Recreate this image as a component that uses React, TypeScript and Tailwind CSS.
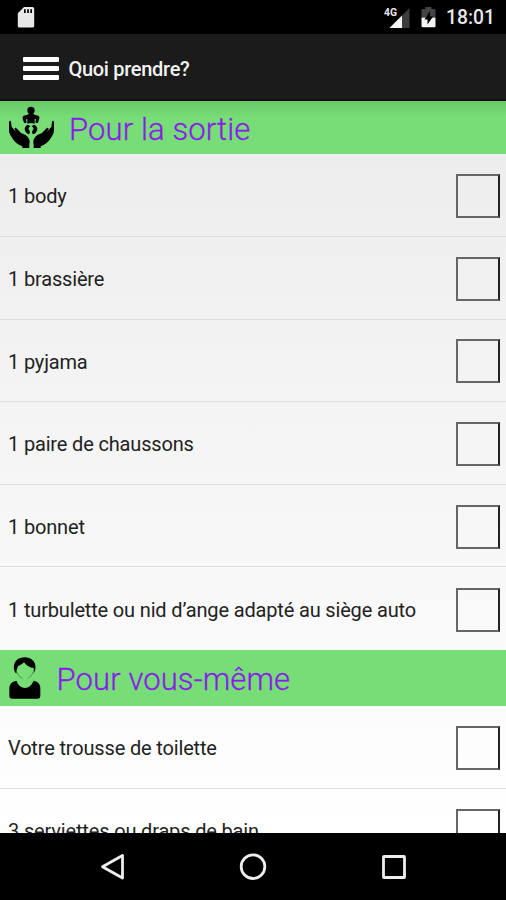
import { clsx } from 'clsx'
import type { ReactNode } from 'react'

const outingItems = [
  '1 body',
  '1 brassière',
  '1 pyjama',
  '1 paire de chaussons',
  '1 bonnet',
  '1 turbulette ou nid d’ange adapté au siège auto',
]

const personalItems = ['Votre trousse de toilette', '3 serviettes ou draps de bain']

function StatusBar() {
  return (
    <div className="flex h-[34px] shrink-0 items-center bg-black pl-[17px] pr-[11px] text-[#e8e8e8]">
      <svg className="mt-px h-[21px] w-[18px]" viewBox="0 0 18 21">
        <path
          fill="currentColor"
          fillRule="evenodd"
          d="M7 0H15.5Q17.2 0 17.2 1.7V19Q17.2 20.5 15.5 20.5H2.4Q.8 20.5 .8 19V6.3ZM7 2.2V6H8.7V2.2ZM10.2 2.2V6H11.9V2.2ZM13.3 2.2V6H15V2.2Z"
        />
      </svg>
      <div className="ml-auto flex items-center">
        <svg className="mr-[11px] mt-px h-[22px] w-[26px]" viewBox="0 0 26 22">
          <path fill="#3c3c3c" d="M25.500 1V21H5.500Z" />
          <path fill="#f4f4f4" d="M18 8.500V21H5.500Z" />
          <path fill="#000" d="M0 0H14V11H0Z" />
          <text
            x="0"
            y="9"
            fill="#e8e8e8"
            fontFamily="Roboto, sans-serif"
            fontSize="10.500"
            fontWeight="700"
            textLength="13"
            lengthAdjust="spacingAndGlyphs"
          >
            4G
          </text>
        </svg>
        <svg className="mr-[10px] h-[22px] w-[15px]" viewBox="0 0 15 22">
          <path
            fill="#444"
            d="M4.500 1H10.500V3H13.200Q14.500 3 14.500 4.300V11H.5V4.300Q.5 3 1.800 3H4.500Z"
          />
          <path fill="#f4f4f4" d="M.5 11.500H14.500V20Q14.500 21.300 13.200 21.300H1.800Q.5 21.300 .5 20Z" />
          <path fill="#000" d="M9 5 3.500 13.500H6.500V18.500L12 10.500H9Z" />
        </svg>
        <span className="mt-[2px] text-[19.300px] font-medium leading-none">18:01</span>
      </div>
    </div>
  )
}

function AppBar() {
  return (
    <header className="flex h-[67px] shrink-0 items-center border-b-2 border-[#101010] bg-[#1b1b1b] pl-[22.500px] text-[#f2f2f2]">
      <button className="mt-[3px] flex w-9 flex-col gap-[4px]" aria-label="Menu">
        <span className="h-[5px] rounded-[1px] bg-white" />
        <span className="h-[5px] rounded-[1px] bg-white" />
        <span className="h-[5px] rounded-[1px] bg-white" />
      </button>
      <h1 className="ml-[10px] mt-1 text-[20px] font-medium leading-none tracking-[-0.300px]">
        Quoi prendre?
      </h1>
    </header>
  )
}

function HandsIcon() {
  return (
    <svg className="h-[45px] w-[48px]" viewBox="24 27 144 135">
      {/* baby */}
      <circle cx="93" cy="43.500" r="11" />
      <path d="M71 59Q82 57 86 54H100Q104 57 115 59Q120 62 118 68L114 80Q109 83 106 79L108 70L104 69V83Q93 79 82 83V69L78 70L80 79Q77 83 72 80L68 68Q66 62 71 59Z" />
      <path d="M82 86L91 90L85 97L90 108L88 115L82 113Q70 102 76 92Z" />
      <path d="M104 86L95 90L101 97L96 108L98 115L104 113Q116 102 110 92Z" />
      {/* left and right hand */}
      <path d="M27 77Q30 71 33 77L35 93L48 107L43 98Q46 93 51 98L63 111L77 117Q90 128 89 138L88 147V156H67V151Q48 144 38 128Q27 114 27 103Z" />
      <path d="M162 77Q159 71 156 77L154 93L141 107L146 98Q143 93 138 98L126 111L112 117Q99 128 100 138L101 147V156H122V151Q141 144 151 128Q162 114 162 103Z" />
    </svg>
  )
}

function PersonIcon() {
  return (
    <svg className="h-[42px] w-[32px]" viewBox="27 50 96 126">
      <path d="M49 100Q38 88 43 70Q51 51 74 51Q98 52 105 70Q110 87 100 99Q103 90 101 83Q84 82 72 66Q66 73 54 78Q49 88 49 100Z" />
      <path
        fill="none"
        stroke="#000"
        strokeOpacity="0.45"
        strokeWidth="2"
        d="M50 95Q56 112 68 114M100 95Q94 111 83 114"
      />
      <path d="M49 121Q57 142 75 143Q92 142 101 121Q121 124 121 145V168Q121 175 114 175H35Q28 175 28 168V145Q28 124 49 121Z" />
    </svg>
  )
}

function SectionHeader({
  icon,
  title,
  className,
}: {
  icon: ReactNode
  title: string
  className?: string
}) {
  return (
    <div className={clsx('flex shrink-0 items-center bg-[#77dd77] pl-2', className)}>
      {icon}
      <h2 className="mt-[3px] text-[31px] font-light leading-none tracking-[0.120px] text-[#8a1bea] [-webkit-text-stroke:0.3px_#8a1bea]">
        {title}
      </h2>
    </div>
  )
}

function Item({ label }: { label: string }) {
  return (
    <li className="flex h-[82.600px] shrink-0 items-center justify-between border-b border-[#dedede] pl-2 pr-[6px] last:border-b-0">
      <span className="mt-[2.500px] text-[20px] leading-6 tracking-[-0.160px] text-[#222]">
        {label}
      </span>
      <span className="mt-[2px] size-11 border-2 border-[#666] border-r-[#222]" />
    </li>
  )
}

function NavigationBar() {
  return (
    <nav className="flex h-[67px] shrink-0 items-center justify-around bg-black pl-[43px] pr-[42px]">
      <svg className="size-[28px]" viewBox="0 0 28 28" fill="none" stroke="#eee" strokeWidth="2.800">
        <path strokeLinejoin="round" d="M23.500 2.500V25L3.500 13.700Z" />
      </svg>
      <svg className="size-[28px]" viewBox="0 0 28 28" fill="none" stroke="#eee" strokeWidth="2.800">
        <circle cx="14" cy="13.700" r="11.800" />
      </svg>
      <svg className="size-[28px]" viewBox="0 0 28 28" fill="none" stroke="#eee" strokeWidth="2.800">
        <rect x="3.500" y="3.500" width="21" height="21" rx="0.500" />
      </svg>
    </nav>
  )
}

export default function App() {
  return (
    <div className="flex h-[900px] w-[506px] flex-col overflow-hidden bg-black font-[Roboto,sans-serif]">
      <StatusBar />
      <AppBar />
      <main className="flex min-h-0 flex-1 flex-col overflow-hidden bg-linear-to-b from-[#ececec] to-white">
        <SectionHeader
          icon={<HandsIcon />}
          title="Pour la sortie"
          className="h-[53.400px] gap-[13px] bg-linear-to-b from-[#68c768] to-[#77dd77] to-30%"
        />
        <ul className="shrink-0">
          {outingItems.map((item) => (
            <Item key={item} label={item} />
          ))}
        </ul>
        <SectionHeader
          icon={<PersonIcon />}
          title="Pour vous-même"
          className="h-[56px] gap-4 pl-[8.500px]"
        />
        <ul className="shrink-0">
          {personalItems.map((item) => (
            <Item key={item} label={item} />
          ))}
        </ul>
      </main>
      <NavigationBar />
    </div>
  )
}
